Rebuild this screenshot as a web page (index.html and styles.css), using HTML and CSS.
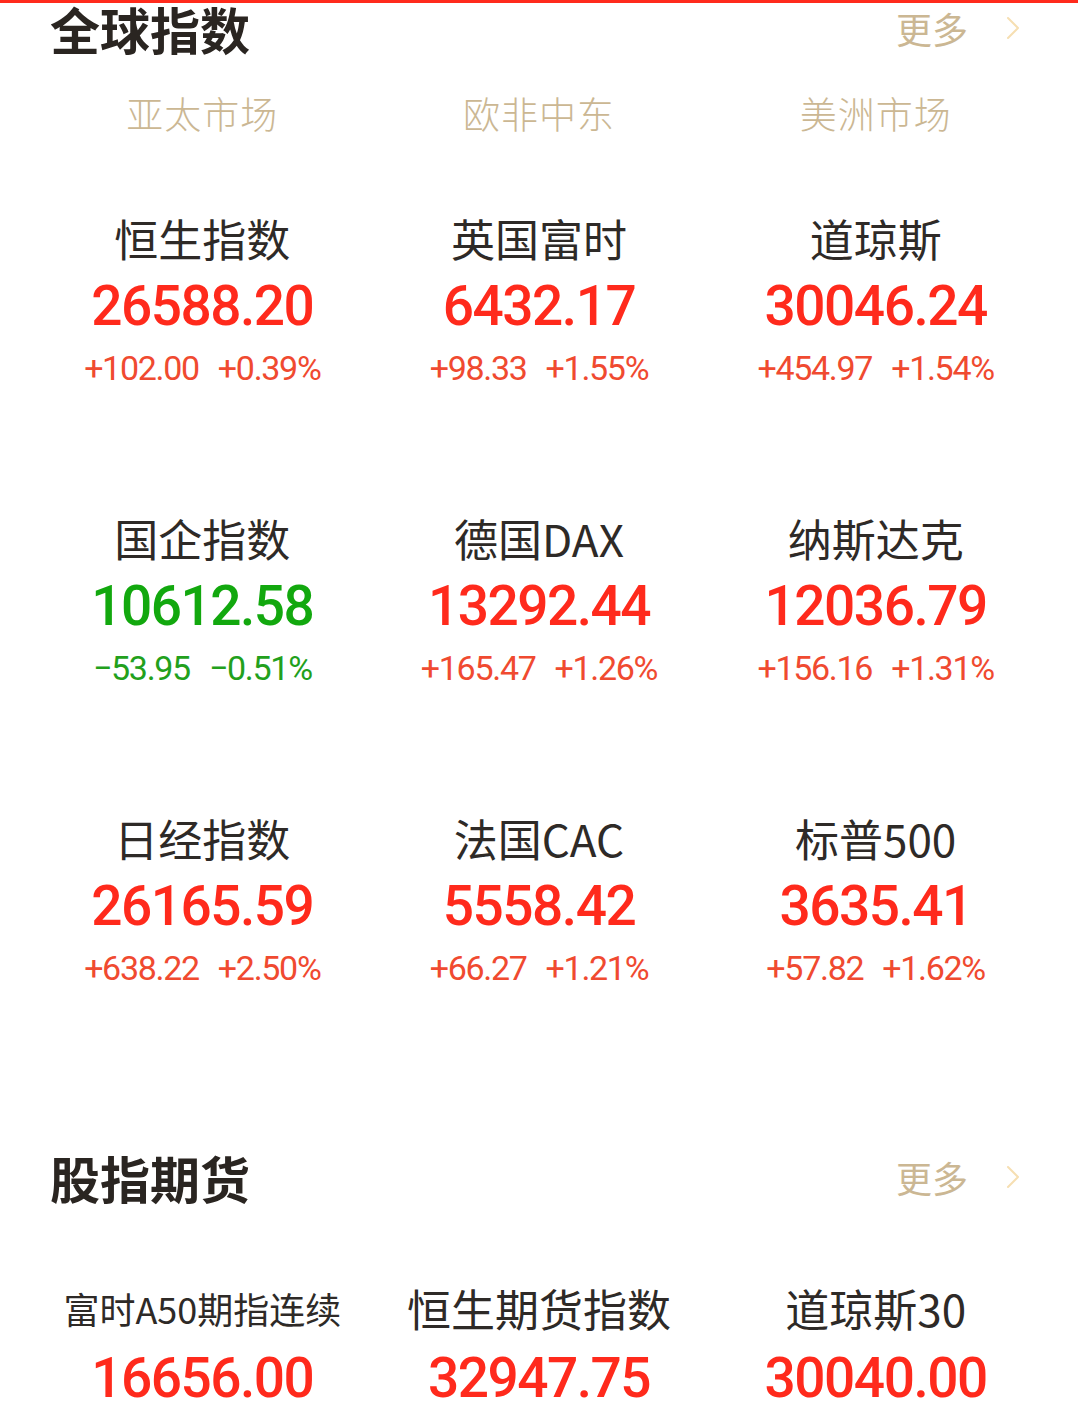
FILE: index.html
```html
<!DOCTYPE html>
<html lang="zh-CN">
<head>
<meta charset="utf-8">
<title>全球指数</title>
<link rel="stylesheet" href="styles.css">
</head>
<body>
<div class="topline"></div>
<main class="page">
  <section class="block">
    <header class="block-head">
      <h2 class="block-title">全球指数</h2>
      <a class="more">更多<svg class="chev" viewBox="0 0 14 24" width="14" height="24"><path d="M2 2 L12 12 L2 22" fill="none" stroke="#f6dfb2" stroke-width="2" stroke-linecap="round" stroke-linejoin="round"/></svg></a>
    </header>
    <nav class="tabs">
      <span class="tab">亚太市场</span>
      <span class="tab">欧非中东</span>
      <span class="tab">美洲市场</span>
    </nav>
    <div class="grid">
      <div class="cell up"><div class="name">恒生指数</div><div class="value">26588.20</div><div class="change"><span>+102.00</span><span>+0.39%</span></div></div>
      <div class="cell up"><div class="name">英国富时</div><div class="value">6432.17</div><div class="change"><span>+98.33</span><span>+1.55%</span></div></div>
      <div class="cell up"><div class="name">道琼斯</div><div class="value">30046.24</div><div class="change"><span>+454.97</span><span>+1.54%</span></div></div>
      <div class="cell down"><div class="name">国企指数</div><div class="value">10612.58</div><div class="change"><span>−53.95</span><span>−0.51%</span></div></div>
      <div class="cell up"><div class="name">德国DAX</div><div class="value">13292.44</div><div class="change"><span>+165.47</span><span>+1.26%</span></div></div>
      <div class="cell up"><div class="name">纳斯达克</div><div class="value">12036.79</div><div class="change"><span>+156.16</span><span>+1.31%</span></div></div>
      <div class="cell up"><div class="name">日经指数</div><div class="value">26165.59</div><div class="change"><span>+638.22</span><span>+2.50%</span></div></div>
      <div class="cell up"><div class="name">法国CAC</div><div class="value">5558.42</div><div class="change"><span>+66.27</span><span>+1.21%</span></div></div>
      <div class="cell up"><div class="name">标普500</div><div class="value">3635.41</div><div class="change"><span>+57.82</span><span>+1.62%</span></div></div>
    </div>
  </section>
  <section class="block futures">
    <header class="block-head">
      <h2 class="block-title">股指期货</h2>
      <a class="more">更多<svg class="chev" viewBox="0 0 14 24" width="14" height="24"><path d="M2 2 L12 12 L2 22" fill="none" stroke="#f6dfb2" stroke-width="2" stroke-linecap="round" stroke-linejoin="round"/></svg></a>
    </header>
    <div class="grid">
      <div class="cell up"><div class="name small">富时A50期指连续</div><div class="value">16656.00</div></div>
      <div class="cell up"><div class="name">恒生期货指数</div><div class="value">32947.75</div></div>
      <div class="cell up"><div class="name">道琼斯30</div><div class="value">30040.00</div></div>
    </div>
  </section>
</main>
</body>
</html>
```

FILE: styles.css
```css
html, body {
  margin: 0;
  padding: 0;
  background: #ffffff;
}
body {
  width: 1078px;
  height: 1407px;
  overflow: hidden;
  font-family: "Noto Sans CJK SC", "Noto Sans", sans-serif;
  color: #2b2724;
}
.topline {
  height: 3px;
  background: #ff2a1c;
}
.page {
  padding: 0 34px;
}
.block-head {
  display: flex;
  align-items: center;
  justify-content: space-between;
  height: 50px;
  padding: 0 24px 0 16px;
}
.block-title {
  margin: 0;
  font-size: 50px;
  line-height: 50px;
  font-weight: 700;
  color: #2a2521;
}
.more {
  display: flex;
  align-items: center;
  font-size: 36px;
  line-height: 50px;
  color: #cbb793;
}
.chev {
  margin-left: 38px;
  width: 14px;
  height: 24px;
}
.tabs {
  display: grid;
  grid-template-columns: repeat(3, 1fr);
  height: 120px;
  align-items: center;
}
.tab {
  text-align: center;
  font-size: 37px;
  line-height: 50px;
  color: #cbb793;
  letter-spacing: 1px;
  font-weight: 300;
}
.grid {
  display: grid;
  grid-template-columns: repeat(3, 1fr);
}
.cell {
  height: 300px;
  box-sizing: border-box;
  padding-top: 35px;
  text-align: center;
}
.name {
  font-size: 44px;
  line-height: 60px;
  color: #2e2a27;
}
.name.small {
  font-size: 36px;
}
.value {
  font-family: Roboto, "Noto Sans", sans-serif;
  font-weight: 500;
  font-size: 55px;
  letter-spacing: -1.5px;
  line-height: 76px;
}
.change {
  display: flex;
  justify-content: center;
  gap: 19px;
  font-family: Roboto, "Noto Sans", sans-serif;
  font-size: 34px;
  letter-spacing: -1.3px;
  line-height: 48px;
}
.up .value { color: #ff2a1c; }
.up .change { color: #f04a30; }
.down .value { color: #12a80e; }
.down .change { color: #22a01c; }
.futures {
  margin-top: 79px;
}
.futures .cell {
  height: auto;
  padding-top: 76px;
}
.futures .value {
  margin-top: 14px;
  line-height: 52px;
}
```
